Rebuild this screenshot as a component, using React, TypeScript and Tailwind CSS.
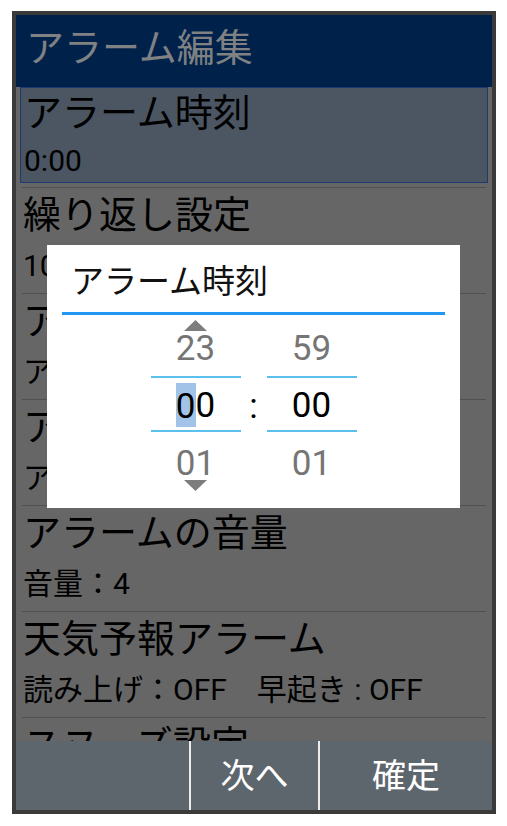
import React from "react";

type ItemProps = {
  title: string;
  sub: string;
};

const ITEMS: ItemProps[] = [
  { title: "繰り返し設定", sub: "10分間隔で3回" },
  { title: "アラーム音", sub: "アラーム1" },
  { title: "アラーム動作", sub: "アラーム＋バイブ" },
  { title: "アラームの音量", sub: "音量：4" },
  { title: "天気予報アラーム", sub: "読み上げ：OFF　早起き : OFF" },
  { title: "スヌーズ設定", sub: "5分" },
];

function Separator() {
  return <div className="mx-[6px] h-px shrink-0 bg-[#505050]" />;
}

function SelectedItem({ title, sub }: ItemProps) {
  return (
    <div className="shrink-0">
      <div className="mx-1 h-[96px] border border-[#1d3b70] bg-[#4c5663] pl-[3px] pt-[2px]">
        <div className="text-[38px] leading-[46px] text-black">{title}</div>
        <div className="mt-[7px] text-[30px] leading-[36px] text-black">{sub}</div>
      </div>
      <div className="h-[4px]" />
      <Separator />
    </div>
  );
}

function Item({ title, sub }: ItemProps) {
  return (
    <div className="shrink-0">
      <div className="h-[105px] overflow-hidden whitespace-nowrap pl-[7px] pt-[4px]">
        <div className="text-[38px] leading-[46px] text-black">{title}</div>
        <div className="mt-[10px] text-[30px] leading-[36px] text-black">{sub}</div>
      </div>
      <Separator />
    </div>
  );
}

function Arrow({ down, hidden }: { down?: boolean; hidden?: boolean }) {
  return (
    <svg
      width="23"
      height="11"
      viewBox="0 0 23 11"
      className={hidden ? "invisible" : ""}
    >
      {down ? (
        <polygon points="0,0 23,0 11.5,11" fill="#7d7d7d" />
      ) : (
        <polygon points="11.5,0 23,11 0,11" fill="#7d7d7d" />
      )}
    </svg>
  );
}

type ColumnProps = {
  prev: string;
  cur: React.ReactNode;
  next: string;
  arrows?: boolean;
};

function PickerColumn({ prev, cur, next, arrows }: ColumnProps) {
  return (
    <div className="flex w-[90px] flex-col items-center">
      <div className="mt-[5px] flex h-[10px] items-start">
        <Arrow hidden={!arrows} />
      </div>
      <div className="mt-[3px] h-[32px] text-[35px] leading-[32px] text-[#757575]">{prev}</div>
      <div className="mt-[11px] h-[2px] w-full bg-[#5bc0eb]" />
      <div className="mt-[5px] flex h-[44px] items-center pt-[2px] text-[35px] leading-[44px] text-black">
        {cur}
      </div>
      <div className="mt-[3px] h-[2px] w-full bg-[#5bc0eb]" />
      <div className="mt-[16px] h-[32px] text-[35px] leading-[32px] text-[#757575]">{next}</div>
      <div className="flex h-[11px] items-start">
        <Arrow down hidden={!arrows} />
      </div>
    </div>
  );
}

function TimeDialog() {
  return (
    <div className="absolute left-[31px] top-[230px] h-[263px] w-[413px] bg-white">
      <div className="pl-[24px] pt-[17px] text-[33px] leading-[40px] text-[#111]">アラーム時刻</div>
      <div className="mx-[15px] mt-[10px] h-[3px] bg-[#2196f3]" />
      <div className="flex justify-center">
        <PickerColumn
          arrows
          prev="23"
          next="01"
          cur={
            <>
              <span className="-mt-[2px] inline-block h-[44px] bg-[#a2c3e8] pt-[2px] leading-[44px]">0</span>
              <span>0</span>
            </>
          }
        />
        <div className="flex w-[26px] justify-center pt-[70px] text-[35px] leading-[44px] text-black">
          :
        </div>
        <PickerColumn prev="59" next="01" cur="00" />
      </div>
    </div>
  );
}

export default function App() {
  return (
    <div className="min-h-screen bg-white pl-3 pt-[11px] font-[family-name:Roboto,'Noto_Sans_CJK_JP',sans-serif]">
      <div className="relative flex w-[484px] flex-col border-4 border-[#3a3a3a] bg-[#666666]">
        <header className="flex h-[72px] items-center bg-[#00214a] pb-[7px] pl-[10px] text-[38px] leading-[46px] text-[#7f8183]">
          アラーム編集
        </header>

        <div className="flex h-[654px] flex-col overflow-hidden">
          <SelectedItem title="アラーム時刻" sub="0:00" />
          {ITEMS.map((item) => (
            <Item key={item.title} title={item.title} sub={item.sub} />
          ))}
        </div>

        <div className="flex h-[69px] bg-[#5e666d] text-[34px] leading-none text-white">
          <div className="w-[173px]" />
          <div className="w-[2px] bg-[#ececec]" />
          <div className="flex w-[127px] items-center justify-center">次へ</div>
          <div className="w-[2px] bg-[#ececec]" />
          <div className="flex flex-1 items-center justify-center">確定</div>
        </div>

        <TimeDialog />
      </div>
    </div>
  );
}
